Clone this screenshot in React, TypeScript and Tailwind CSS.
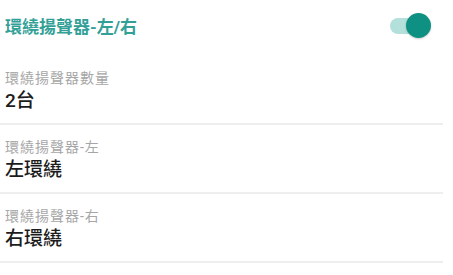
import { useState } from "react"

const ROWS = [
  { label: "環繞揚聲器數量", value: "2台" },
  { label: "環繞揚聲器-左", value: "左環繞" },
  { label: "環繞揚聲器-右", value: "右環繞" },
]

const FONT = "font-['Roboto','Noto_Sans_CJK_TC',sans-serif]"

export default function App() {
  const [on, setOn] = useState(true)

  return (
    <div className={`w-[453px] h-[275px] bg-white overflow-hidden ${FONT}`}>
      <div className="flex items-center justify-between h-[56px] pl-[5px] pr-[22px]">
        <span className="text-[17px] leading-[20px] font-bold text-[#33a098] -mt-[3px]">環繞揚聲器-左/右</span>
        <button
          onClick={() => setOn(!on)}
          className="relative w-[42px] h-[25px] -mt-[5px] flex items-center"
        >
          <span className="w-[36px] h-[16px] ml-[1px] rounded-full bg-[#b3e0da]" />
          <span
            className={`absolute top-0 w-[25px] h-[25px] rounded-full bg-[#0e9182] shadow-[0_1px_2px_rgba(0,0,0,0.2)] ${
              on ? "right-0" : "left-0"
            }`}
          />
        </button>
      </div>
      {ROWS.map((row) => (
        <div key={row.label} className="pr-[10px]">
          <div className="pl-[5px] pt-[12px] pb-[9px]">
            <div className="text-[14px] leading-[20px] tracking-[1px] text-[#a6a6a6]">{row.label}</div>
            <div className="text-[19px] leading-[26px] font-medium text-[#1c1c1c]">{row.value}</div>
          </div>
          <div className="h-[2px] bg-[#eeeeee]" />
        </div>
      ))}
    </div>
  )
}
